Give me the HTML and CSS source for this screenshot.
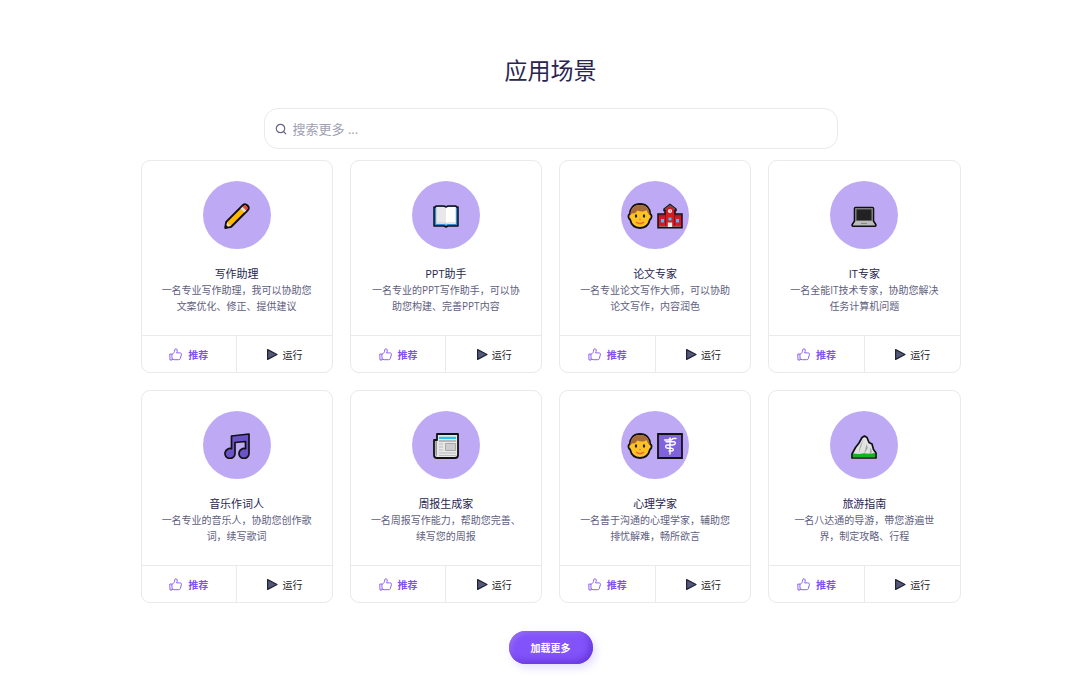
FILE: index.html
```html
<!DOCTYPE html>
<html lang="zh-CN">
<head>
    <meta charset="UTF-8">
    <meta name="viewport" content="width=device-width, initial-scale=1.0">
    <title>应用场景</title>
    <link rel="stylesheet" href="styles.css">
</head>
<body>
    <!-- Shared icons -->
    <svg class="sprite" aria-hidden="true">
        <symbol id="thumb" viewBox="0 0 13 13">
            <path d="M.8 6h2l.4 6H1zM3 6.300C4.800 5.500 5.500 4.300 5.700 2c.1-1.600 2.100-1.700 2.500-.1.2 1-.2 2-.6 3h3.200c1.400 0 1.900.8 1.600 1.800l-1.100 3.800c-.3.900-.7 1.200-1.500 1.200H5.200l-2-.7" fill="none" stroke="#8050f5" stroke-width=".9" stroke-linejoin="round"/>
        </symbol>
        <symbol id="play" viewBox="0 0 12 12">
            <path d="M1.500 1.500v9L10.200 6z" fill="#555978" stroke="#222337" stroke-width="1.100" stroke-linejoin="round"/>
        </symbol>
        <symbol id="pencil" viewBox="0 0 26 26">
            <path d="M1.200 24.900l1-6L18.800 2.300c3-2.900 7.700 1.700 4.900 4.900L7.200 23.700z" fill="#ffb900" stroke="#111" stroke-width="2" stroke-linejoin="round"/>
            <path d="M2.200 23.900l.9-4.600 3.700 3.700z" fill="#f3d8c0"/>
            <path d="M1.500 24.500l.6-2.500 2 2z" fill="#111"/>
            <path d="M16.600 5.800l3.700 3.800 2-2-3.700-3.900z" fill="#ddd"/>
            <path d="M18.600 3.700l3.700 3.900c3.300-2.800-.8-6.800-3.700-3.900z" fill="#ef4050"/>
        </symbol>
        <symbol id="book" viewBox="0 0 26 26">
            <path d="M1 4h2V3h8l2 1 2-1h8v1h2v19H15l-2 1-2-1H1z" fill="#2f8fd8" stroke="#111" stroke-width="1.500" stroke-linejoin="round"/>
            <path d="M3.200 4H11l2 1v16.500L11 21H3.200z" fill="#e8e8e8"/>
            <path d="M22.800 4H15l-2 1v16.500l2-.5h7.800z" fill="#fff"/>
            <path d="M3.200 20H12l1 .8 1-.8h8.800" fill="none" stroke="#ccc"/>
        </symbol>
        <symbol id="boy" viewBox="0 0 26 26">
            <path d="M13 1C6.500 1 3 5.500 2.700 11.300 1 11.500.9 15.500 3 16.300 4.200 21.500 8 25 13 25s8.800-3.500 10-8.700c2.100-.8 2-4.800.3-5C23 5.500 19.500 1 13 1z" fill="#ffc225" stroke="#111" stroke-width="1.800"/>
            <path d="M3.400 12C3 6 7 2 13 2s10 4 9.600 10l-1.800-2-1.300-3c-3 2-6 1.800-9 .5L8 10.300 5 10.500z" fill="#a56b3c"/>
            <ellipse cx="9" cy="13" rx="1.200" ry="1.700" fill="#222"/>
            <ellipse cx="17" cy="13" rx="1.200" ry="1.700" fill="#222"/>
            <path d="M12 16.500h2" stroke="#e48a20"/>
            <path d="M9.500 19.300c2 1.500 5 1.500 7 0" fill="none" stroke="#ef693c" stroke-width="1.500" stroke-linecap="round"/>
        </symbol>
        <symbol id="school" viewBox="0 0 26 26">
            <path d="M1 24.800V11h7V7.500H7V6l6-4.500L19 6v1.500h-1V11h7v13.800z" fill="#d71921" stroke="#111" stroke-width="1.500"/>
            <path d="M8 6.300l5-3.700 5 3.700" fill="none" stroke="#6d5150" stroke-width="1.500"/>
            <path d="M2 12.500h6M18 12.500h6" stroke="#713336" stroke-width="1.600"/>
            <path d="M8.500 12v12M17.500 12v12" stroke="#8d1119"/>
            <circle cx="13" cy="8" r="2.100" fill="#eee"/>
            <path d="M13 6.700v1.500h1" fill="none" stroke="#d34" stroke-width=".7"/>
            <path d="M4 16h3v3.500H4zM19 16h3v3.500h-3zM11.500 14.500h3v3h-3z" fill="#36c4f4"/>
            <path d="M10.800 19.500h4.400V24h-4.400z" fill="#eee"/>
            <path d="M2 23.300h8.500M15.500 23.300H24" stroke="#777"/>
        </symbol>
        <symbol id="laptop" viewBox="0 0 26 26">
            <path d="M3.500 5.500q0-1 1-1h17q1 0 1 1V18l2.300 3.500q.5 1.700-1 1.700H2.200q-1.500 0-1-1.700L3.500 18z" fill="#bbb" stroke="#111" stroke-width="1.600" stroke-linejoin="round"/>
            <path d="M4.300 5.300h17.400V18H4.300z" fill="#777"/>
            <path d="M5.600 6.600h14.800v10.600H5.600z" fill="#222"/>
            <path d="M10 20.500h6" stroke="#888"/>
        </symbol>
        <symbol id="music" viewBox="0 0 26 26">
            <path d="M7.500 3L25 1v19.500a5 5 0 1 1-3.500-4.800V8.500L11 9.500v11a5 5 0 1 1-3.500-4.800z" fill="#6b52c8" stroke="#111" stroke-width="1.700" stroke-linejoin="round"/>
        </symbol>
        <symbol id="news" viewBox="0 0 26 26">
            <path d="M4 1h21v21q0 3-3 3H4q-3 0-3-3V7h3z" fill="#e7e7e7" stroke="#111" stroke-width="1.800" stroke-linejoin="round"/>
            <path d="M2.300 8H4v15q-1.700 0-1.700-2z" fill="#999"/>
            <path d="M6 4.800h17" stroke="#29c4ee" stroke-width="2.200"/>
            <path d="M6 8h17" stroke="#888" stroke-width="1.200"/>
            <path d="M6 11h4M6 14h4M6 17h4M6 20h17M6 22.500h17" stroke="#bbb" stroke-width="1.200"/>
            <path d="M12.500 10.500h10v7h-10z" fill="#ccc" stroke="#aaa"/>
        </symbol>
        <symbol id="medical" viewBox="0 0 26 26">
            <path d="M1 1h24v24H1z" fill="#8062dc" stroke="#111" stroke-width="1.800"/>
            <path d="M13 5v16M7.500 7h4l1.500-1.500L14.500 7l1.500-1.500h3M9 8.800h8.500c1.700 1 .7 3.200-1.500 3.200h-5.500c-2.500 0-2.500 3 0 3.200h4c2.500.2 2.500 2.800 0 2.800H12" fill="none" stroke="#fff" stroke-width="1.400" stroke-linecap="round" stroke-linejoin="round"/>
        </symbol>
        <symbol id="mountain" viewBox="0 0 26 26">
            <path d="M1 25v-4l3.500-6.500L8 10l3-5.500L13.500 3 16 4.500l2 5 3 1.500 1.500 5.500L25 20v5z" fill="#e2e2e2" stroke="#111" stroke-width="1.700" stroke-linejoin="round"/>
            <path d="M12.500 6L10 14l-2.500 7L9 13zM15.500 11l-2.500 10 4-6zM19.500 14l-1 7 2.500-2z" fill="#aaa"/>
            <path d="M2 24v-3.500l6 .5 5-.8 5 .5 6-.7v4z" fill="#12b51b"/>
        </symbol>
    </svg>

    <main class="container">
        <h1>应用场景</h1>
        <label class="search-box">
            <svg class="search-icon" viewBox="0 0 12 12" aria-hidden="true">
                <circle cx="5.500" cy="5.500" r="4.200" fill="none" stroke="#67648b" stroke-width="1.200"/>
                <path d="M8.500 8.500l2.300 2.300" stroke="#67648b" stroke-width="1.200" stroke-linecap="round"/>
            </svg>
            <input type="text" placeholder="搜索更多 ..." aria-label="搜索更多">
        </label>

        <section class="card-grid">
            <article class="card">
                <div class="card-body">
                    <div class="avatar"><svg class="emoji"><use href="#pencil"/></svg></div>
                    <h2>写作助理</h2>
                    <p>一名专业写作助理，我可以协助您文案优化、修正、提供建议</p>
                </div>
                <div class="card-actions">
                    <button type="button" class="like"><svg><use href="#thumb"/></svg>推荐</button>
                    <button type="button" class="run"><svg><use href="#play"/></svg>运行</button>
                </div>
            </article>
            <article class="card">
                <div class="card-body">
                    <div class="avatar"><svg class="emoji"><use href="#book"/></svg></div>
                    <h2>PPT助手</h2>
                    <p>一名专业的PPT写作助手，可以协助您构建、完善PPT内容</p>
                </div>
                <div class="card-actions">
                    <button type="button" class="like"><svg><use href="#thumb"/></svg>推荐</button>
                    <button type="button" class="run"><svg><use href="#play"/></svg>运行</button>
                </div>
            </article>
            <article class="card">
                <div class="card-body">
                    <div class="avatar"><svg class="emoji"><use href="#boy"/></svg><svg class="emoji"><use href="#school"/></svg></div>
                    <h2>论文专家</h2>
                    <p>一名专业论文写作大师，可以协助论文写作，内容润色</p>
                </div>
                <div class="card-actions">
                    <button type="button" class="like"><svg><use href="#thumb"/></svg>推荐</button>
                    <button type="button" class="run"><svg><use href="#play"/></svg>运行</button>
                </div>
            </article>
            <article class="card">
                <div class="card-body">
                    <div class="avatar"><svg class="emoji"><use href="#laptop"/></svg></div>
                    <h2>IT专家</h2>
                    <p>一名全能IT技术专家，协助您解决任务计算机问题</p>
                </div>
                <div class="card-actions">
                    <button type="button" class="like"><svg><use href="#thumb"/></svg>推荐</button>
                    <button type="button" class="run"><svg><use href="#play"/></svg>运行</button>
                </div>
            </article>
            <article class="card">
                <div class="card-body">
                    <div class="avatar"><svg class="emoji"><use href="#music"/></svg></div>
                    <h2>音乐作词人</h2>
                    <p>一名专业的音乐人，协助您创作歌词，续写歌词</p>
                </div>
                <div class="card-actions">
                    <button type="button" class="like"><svg><use href="#thumb"/></svg>推荐</button>
                    <button type="button" class="run"><svg><use href="#play"/></svg>运行</button>
                </div>
            </article>
            <article class="card">
                <div class="card-body">
                    <div class="avatar"><svg class="emoji"><use href="#news"/></svg></div>
                    <h2>周报生成家</h2>
                    <p>一名周报写作能力，帮助您完善、续写您的周报</p>
                </div>
                <div class="card-actions">
                    <button type="button" class="like"><svg><use href="#thumb"/></svg>推荐</button>
                    <button type="button" class="run"><svg><use href="#play"/></svg>运行</button>
                </div>
            </article>
            <article class="card">
                <div class="card-body">
                    <div class="avatar"><svg class="emoji"><use href="#boy"/></svg><svg class="emoji"><use href="#medical"/></svg></div>
                    <h2>心理学家</h2>
                    <p>一名善于沟通的心理学家，辅助您排忧解难，畅所欲言</p>
                </div>
                <div class="card-actions">
                    <button type="button" class="like"><svg><use href="#thumb"/></svg>推荐</button>
                    <button type="button" class="run"><svg><use href="#play"/></svg>运行</button>
                </div>
            </article>
            <article class="card">
                <div class="card-body">
                    <div class="avatar"><svg class="emoji"><use href="#mountain"/></svg></div>
                    <h2>旅游指南</h2>
                    <p>一名八达通的导游，带您游遍世界，制定攻略、行程</p>
                </div>
                <div class="card-actions">
                    <button type="button" class="like"><svg><use href="#thumb"/></svg>推荐</button>
                    <button type="button" class="run"><svg><use href="#play"/></svg>运行</button>
                </div>
            </article>
        </section>

        <button type="button" class="load-more">加载更多</button>
    </main>
</body>
</html>
```

FILE: styles.css
```css
* {
    box-sizing: border-box;
}
body {
    font-family: "Open Sans", "Noto Sans CJK SC", sans-serif;
    margin: 0;
    padding: 55px 0 32px 21px;
    background-color: #fff;
    color: #29264f;
}
button, input {
    font-family: inherit;
}
.sprite {
    display: none;
}
.container {
    display: flex;
    flex-direction: column;
    align-items: center;
    max-width: 820px;
    margin: 0 auto;
}
h1 {
    margin: 0 0 23px;
    font-size: 23px;
    font-weight: 400;
    line-height: 30px;
    color: #29254f;
}
.search-box {
    display: flex;
    align-items: center;
    gap: 6px;
    width: 70%;
    height: 41px;
    padding: 0 10px;
    border: 1px solid #e9e9ee;
    border-radius: 14px;
}
.search-icon {
    flex: none;
    width: 12px;
    height: 12px;
}
.search-box input {
    flex: 1;
    padding: 0;
    border: 0;
    outline: 0;
    background: none;
    font-size: 13px;
    line-height: 20px;
    color: #29264f;
}
.search-box input::placeholder {
    color: #a09fb4;
    opacity: 1;
}
.card-grid {
    display: grid;
    grid-template-columns: repeat(4, 1fr);
    gap: 17px;
    width: 100%;
    margin: 11px 0 28px;
}
.card {
    display: flex;
    flex-direction: column;
    border: 1px solid #e9e9ee;
    border-radius: 9px;
    overflow: hidden;
}
.card-body {
    flex: 1;
    padding: 20px 18px 21px;
    text-align: center;
}
.avatar {
    display: flex;
    align-items: center;
    justify-content: center;
    gap: 4px;
    width: 68px;
    height: 68px;
    margin: 0 auto 16px;
    padding-top: 2px;
    border-radius: 50%;
    background-color: #bea9f5;
}
.emoji {
    width: 26px;
    height: 26px;
}
.card h2 {
    margin: 0;
    font-size: 11px;
    font-weight: 400;
    line-height: 17px;
}
.card p {
    margin: 0;
    font-size: 10px;
    line-height: 16px;
    color: #605e7e;
}
.card-actions {
    display: flex;
    border-top: 1px solid #e9e9ee;
}
.card-actions button {
    display: flex;
    flex: 1;
    align-items: center;
    justify-content: center;
    height: 36px;
    padding: 0;
    border: 0;
    background: none;
    font-size: 10px;
    cursor: pointer;
}
.card-actions svg {
    width: 13px;
    height: 13px;
}
.card-actions .like {
    gap: 6px;
    color: #8050f5;
    font-weight: 700;
}
.card-actions .run {
    gap: 3px;
    border-left: 1px solid #e9e9ee;
    color: #222;
}
.load-more {
    height: 33px;
    padding: 0 22px;
    border: 0;
    border-radius: 17px;
    background-color: #8353fa;
    box-shadow: 3px 4px 8px rgba(112, 92, 246, 0.2), inset -3px -3px 7px #6637dd, inset 2px 2px 5px #9875f5;
    color: #fff;
    font-size: 10px;
    font-weight: 700;
    cursor: pointer;
}
@media (max-width: 768px) {
    body {
        padding: 32px 16px;
    }
    .card-grid {
        grid-template-columns: repeat(2, 1fr);
    }
    .search-box {
        width: 100%;
    }
}
```
